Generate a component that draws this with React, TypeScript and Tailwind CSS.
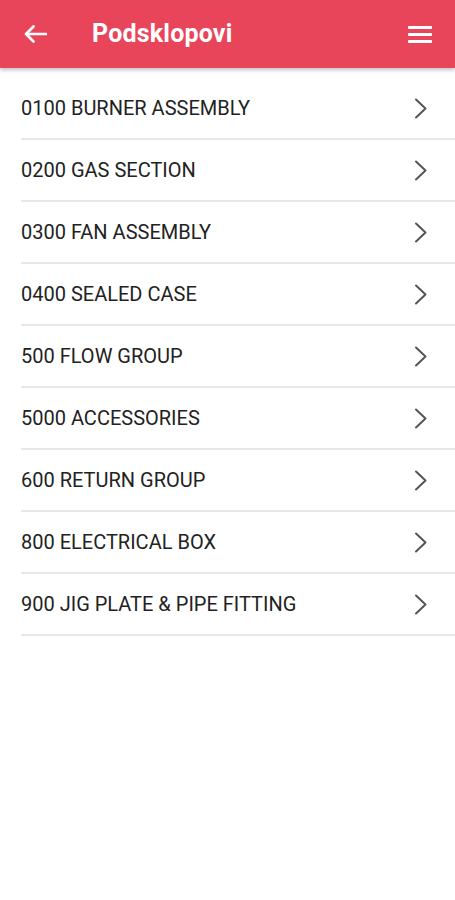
const items = [
  '0100 BURNER ASSEMBLY',
  '0200 GAS SECTION',
  '0300 FAN ASSEMBLY',
  '0400 SEALED CASE',
  '500 FLOW GROUP',
  '5000 ACCESSORIES',
  '600 RETURN GROUP',
  '800 ELECTRICAL BOX',
  '900 JIG PLATE & PIPE FITTING',
];

const App = () => {
  return (
    <div className="w-[455px] h-[900px] bg-white font-['Roboto',sans-serif]">
      <header className="h-[68px] bg-[#e8455b] flex items-center pl-[24px] pr-[23px] shadow-[0_2px_4px_rgba(0,0,0,0.25)] relative">
        <svg width="23" height="18" viewBox="0 0 23 18" fill="none" stroke="white" strokeWidth="2.6" strokeLinecap="round" strokeLinejoin="round">
          <path d="M22 9H2M9.5 1.5 2 9l7.5 7.5" />
        </svg>
        <h1 className="ml-[45px] text-white text-[25px] font-bold tracking-[0.2px]">Podsklopovi</h1>
        <svg className="ml-auto" width="24" height="17" viewBox="0 0 24 17" fill="white">
          <rect x="0" y="0" width="24" height="3" rx="1" />
          <rect x="0" y="7" width="24" height="3" rx="1" />
          <rect x="0" y="14" width="24" height="3" rx="1" />
        </svg>
      </header>
      <ul className="pt-[10px] pl-[21px]">
        {items.map((item) => (
          <li
            key={item}
            className="h-[62px] flex items-center border-b-2 border-[#e8e8e8] pr-[28px]"
          >
            <span className="flex-1 text-[20px] text-[#222]">{item}</span>
            <svg width="13" height="21" viewBox="0 0 13 21" fill="none" stroke="#555" strokeWidth="2" strokeLinecap="round" strokeLinejoin="round">
              <path d="M2 1.5 11.5 10.5 2 19.5" />
            </svg>
          </li>
        ))}
      </ul>
    </div>
  );
};

export default App;
